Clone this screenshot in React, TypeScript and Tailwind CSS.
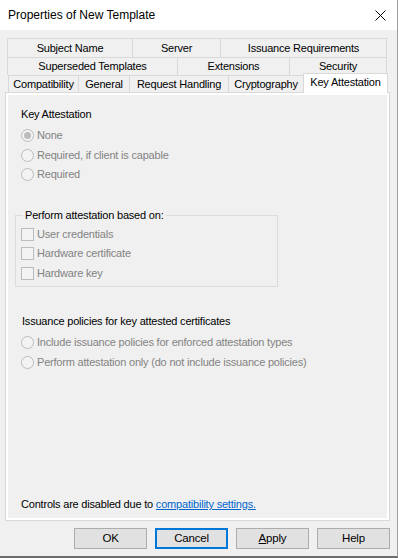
import React from 'react';

const tab = 'flex items-center justify-center border-t border-l border-[#d9d9d9] bg-[#f0f0f0] text-black';

const Radio = ({ label, checked }: { label: string; checked?: boolean }) => (
  <div className="flex items-center h-[19.5px]">
    <span className="flex items-center justify-center w-[13px] h-[13px] rounded-full border border-[#bcbcbc] bg-[#f3f3f3]">
      {checked && <span className="w-[7px] h-[7px] rounded-full bg-[#bcbcbc]" />}
    </span>
    <span className="ml-[3px] text-[#838383]">{label}</span>
  </div>
);

const Check = ({ label }: { label: string }) => (
  <div className="flex items-center h-[19.5px]">
    <span className="w-[13px] h-[13px] border border-[#bcbcbc] bg-[#f3f3f3]" />
    <span className="ml-[3px] text-[#838383]">{label}</span>
  </div>
);

const Button = ({ children, primary }: { children: React.ReactNode; primary?: boolean }) => (
  <button
    className={
      primary
        ? 'w-[73px] h-[21px] bg-[#e1e1e1] border-2 border-[#0078d7] text-black'
        : 'w-[73px] h-[21px] bg-[#e1e1e1] border border-[#adadad] text-black'
    }
  >
    {children}
  </button>
);

export default function App() {
  return (
    <div className="w-[398px] h-[558px] flex flex-col bg-[#f0f0f0] border-r border-b-2 border-r-[#a0a0a0] border-b-[#6d6d6d] font-['Liberation_Sans',sans-serif] text-[11px] tracking-[-0.2px] leading-[15px] text-black">
      {/* Title bar */}
      <div className="h-[30px] shrink-0 bg-white flex items-center justify-between pl-[8px] pr-[11px] text-[12px] tracking-normal">
        <span>Properties of New Template</span>
        <svg width="11" height="11" viewBox="0 0 11 11">
          <path d="M0.5 0.5 L10.5 10.5 M10.5 0.5 L0.5 10.5" stroke="#000" strokeWidth="1" />
        </svg>
      </div>

      {/* Tabs */}
      <div className="mt-[8px] ml-[7px] w-[381px]">
        <div className="flex h-[19px]">
          <div className={`${tab} w-[125px]`}>Subject Name</div>
          <div className={`${tab} w-[88px]`}>Server</div>
          <div className={`${tab} w-[167px] border-r`}>Issuance Requirements</div>
        </div>
        <div className="flex h-[18px]">
          <div className={`${tab} w-[170px]`}>Superseded Templates</div>
          <div className={`${tab} w-[112px]`}>Extensions</div>
          <div className={`${tab} w-[98px] border-r`}>Security</div>
        </div>
        <div className="flex items-end h-[17px] ml-[1px]">
          <div className={`${tab} w-[70px] h-[17px]`}>Compatibility</div>
          <div className={`${tab} w-[51px] h-[17px]`}>General</div>
          <div className={`${tab} w-[99px] h-[17px]`}>Request Handling</div>
          <div className={`${tab} w-[75px] h-[17px]`}>Cryptography</div>
          <div className="relative z-10 -mb-px flex items-start justify-center pt-[1px] w-[85px] h-[20px] bg-white border-t border-l border-r border-[#d9d9d9]">
            Key Attestation
          </div>
        </div>
      </div>

      {/* Panel */}
      <div className="ml-[5px] w-[385px] h-[429px] shrink-0 border border-[#d9d9d9] bg-white p-[2px]">
        <div className="h-full flex flex-col bg-[#f0f0f0] pl-[13px]">
          <div className="mt-[12px]">Key Attestation</div>
          <div className="mt-[4px]">
            <Radio label="None" checked />
            <Radio label="Required, if client is capable" />
            <Radio label="Required" />
          </div>

          <fieldset className="mt-[23px] -ml-[6px] w-[263px] border border-[#dcdcdc] pb-[3px]">
            <legend className="ml-[7px] px-[2px]">Perform attestation based on:</legend>
            <div className="pl-[5px] mt-[2px]">
              <Check label="User credentials" />
              <Check label="Hardware certificate" />
              <Check label="Hardware key" />
            </div>
          </fieldset>

          <div className="mt-[27px] ml-px">Issuance policies for key attested certificates</div>
          <div className="mt-[4px]">
            <Radio label="Include issuance policies for enforced attestation types" />
            <Radio label="Perform attestation only (do not include issuance policies)" />
          </div>

          <div className="mt-auto mb-[6px]">
            Controls are disabled due to{' '}
            <span className="text-[#0066cc] underline">compatibility settings.</span>
          </div>
        </div>
      </div>

      {/* Buttons */}
      <div className="mt-[7px] flex justify-end gap-[8px] pr-[7px] text-[11.5px]">
        <Button>OK</Button>
        <Button primary>Cancel</Button>
        <Button>
          <span className="underline">A</span>pply
        </Button>
        <Button>Help</Button>
      </div>
    </div>
  );
}
